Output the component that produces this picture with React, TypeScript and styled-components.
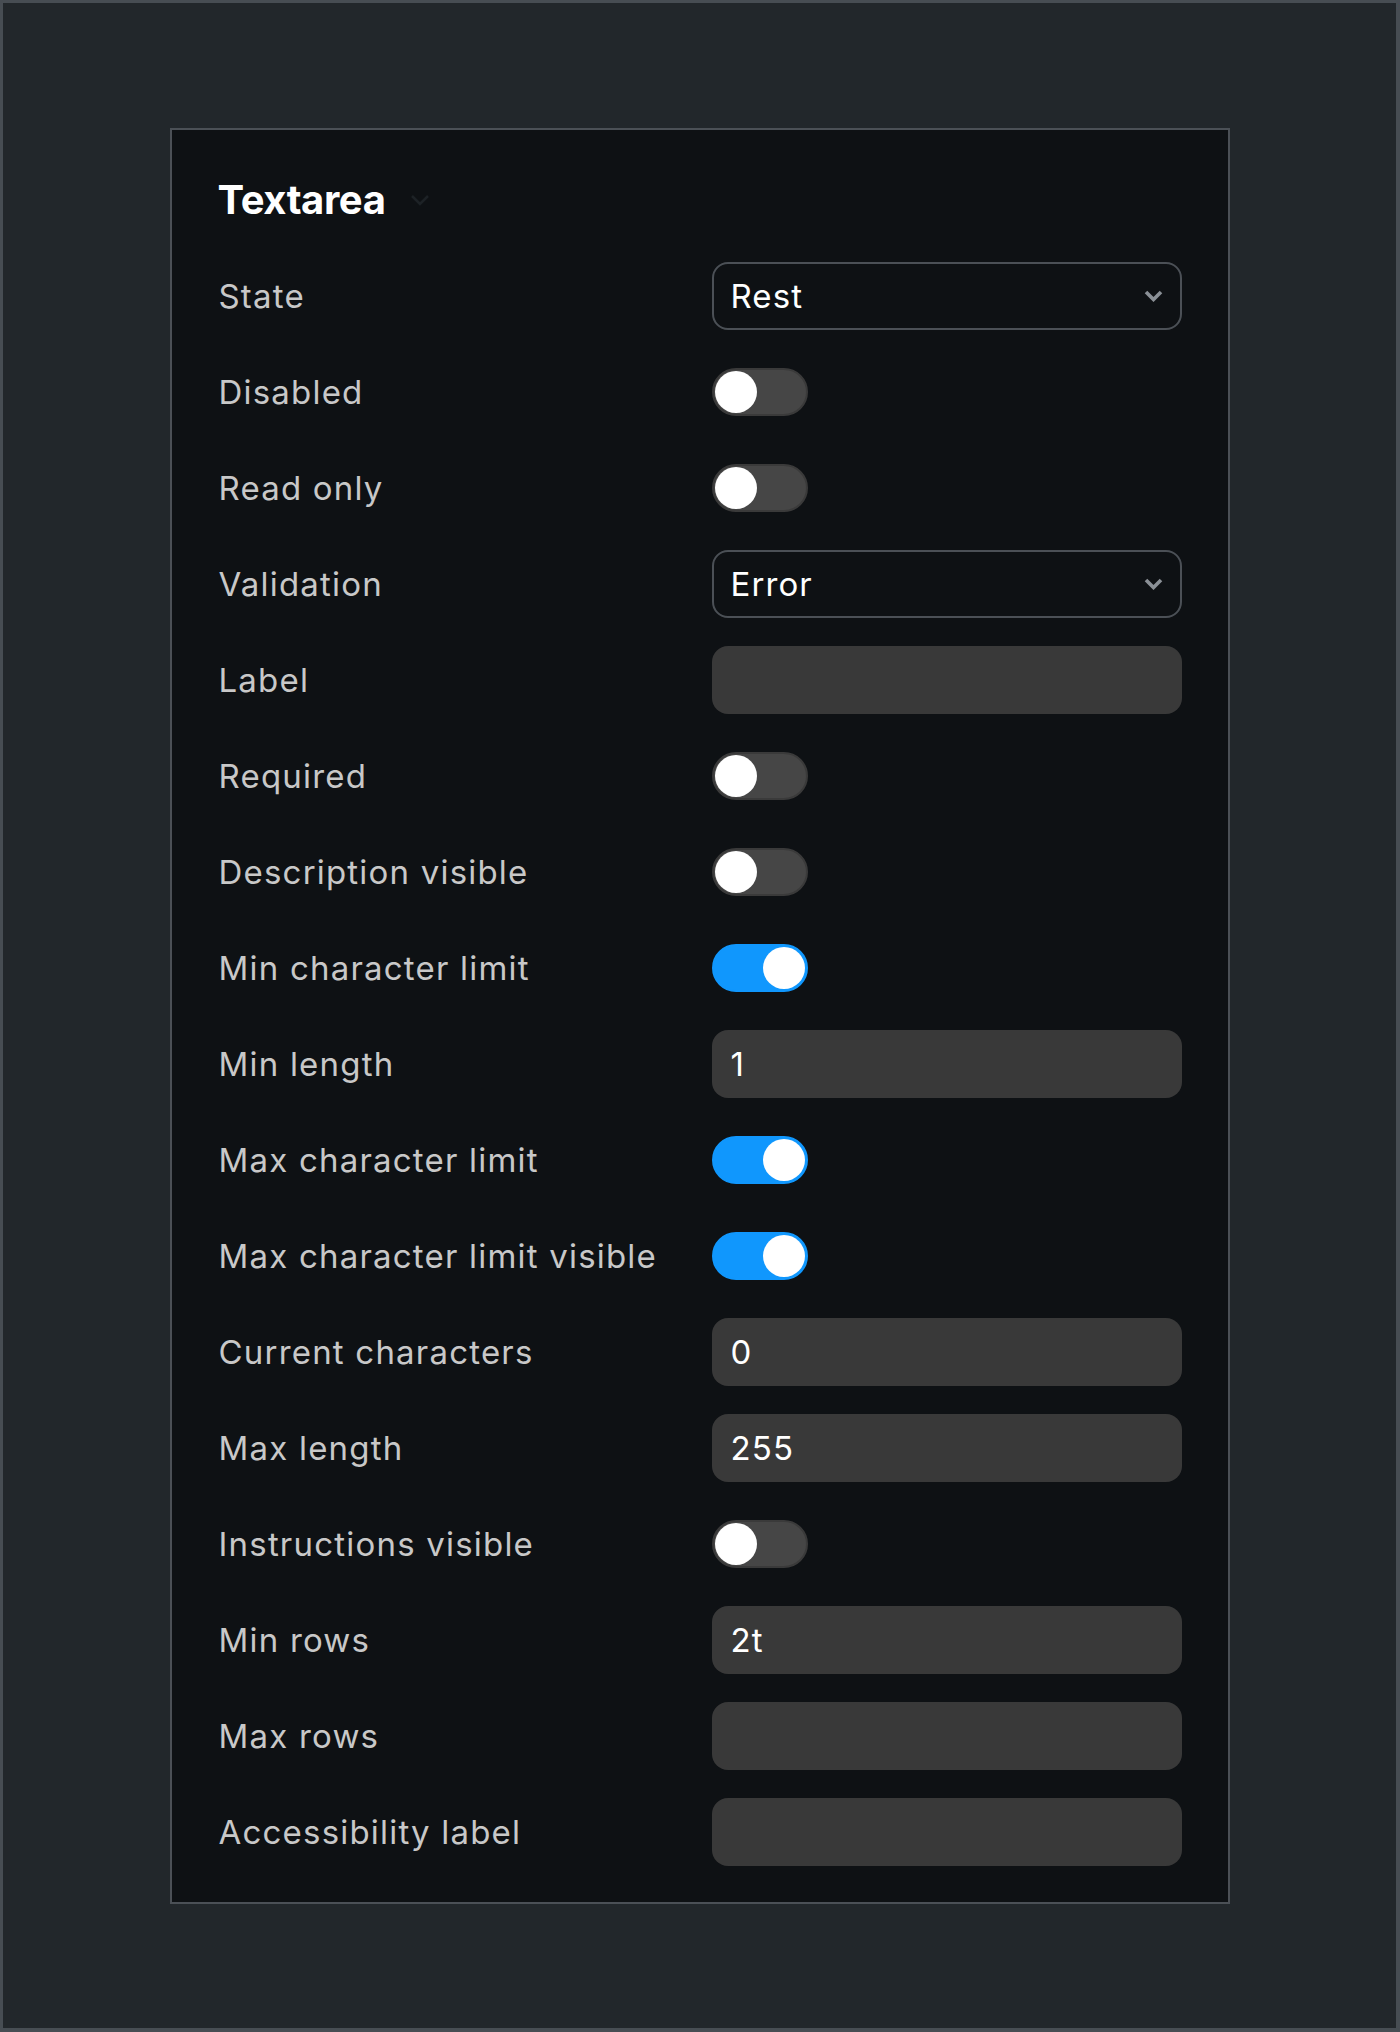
import React from "react";
import styled, { createGlobalStyle } from "styled-components";

const GlobalStyle = createGlobalStyle`
    html, body {
        margin: 0;
        padding: 0;
        background: #22272b;
    }
    body {
        font-family: Inter, "Noto Sans", "Liberation Sans", sans-serif;
        -webkit-font-smoothing: antialiased;
    }
`;

const Frame = styled.div`
    width: 1400px;
    height: 2032px;
    box-sizing: border-box;
    border-style: solid;
    border-color: #474d53;
    border-width: 3px 4px 4px 3px;
    background: #22272b;
    display: flex;
    justify-content: center;
    align-items: flex-start;
    padding-top: 125px;
`;

const Panel = styled.section`
    width: 1060px;
    box-sizing: border-box;
    border: 2px solid #4b5056;
    background: #0e1114;
    padding: 46px 46px 36px 46px;
`;

const Header = styled.div`
    display: flex;
    align-items: center;
    gap: 24px;
    margin-bottom: 38px;
`;

const Title = styled.h2`
    margin: 0;
    font-size: 40px;
    line-height: 48px;
    font-weight: 700;
    letter-spacing: -0.4px;
    color: #ffffff;
`;

const HeaderChevron = styled.svg`
    width: 20px;
    height: 13px;
    color: #1d2226;
`;

const List = styled.div`
    display: grid;
    row-gap: 28px;
`;

const Row = styled.div`
    display: grid;
    grid-template-columns: 494px 470px;
    align-items: center;
    min-height: 68px;
`;

const Label = styled.span`
    font-size: 33px;
    line-height: 40px;
    letter-spacing: 1.2px;
    color: #c8c8c8;
    padding-left: 1px;
`;

const Select = styled.div`
    height: 68px;
    box-sizing: border-box;
    border: 2px solid #4b5056;
    border-radius: 16px;
    padding: 0 17px 0 17px;
    display: flex;
    align-items: center;
    justify-content: space-between;
    font-size: 33px;
    letter-spacing: 1.1px;
    color: #ffffff;
`;

const SelectChevron = styled.svg`
    width: 19px;
    height: 12px;
    color: #8a9096;
`;

const TextField = styled.input`
    height: 68px;
    width: 100%;
    box-sizing: border-box;
    border: none;
    outline: none;
    border-radius: 16px;
    background: #393939;
    padding: 0 19px;
    font-family: inherit;
    font-size: 33px;
    letter-spacing: 1.1px;
    color: #ffffff;
`;

const Track = styled.div<{ $on: boolean }>`
    position: relative;
    width: 96px;
    height: 48px;
    box-sizing: border-box;
    border-radius: 24px;
    background: ${(p) => (p.$on ? "#1097fd" : "#464646")};
    border: 2px solid ${(p) => (p.$on ? "#1097fd" : "#3a3a3a")};
`;

const Knob = styled.span<{ $on: boolean }>`
    position: absolute;
    top: 1px;
    left: ${(p) => (p.$on ? "49px" : "1px")};
    width: 42px;
    height: 42px;
    border-radius: 50%;
    background: #ffffff;
`;

type Field =
    | { label: string; kind: "select"; value: string }
    | { label: string; kind: "toggle"; on: boolean }
    | { label: string; kind: "text"; value: string };

const fields: Field[] = [
    { label: "State", kind: "select", value: "Rest" },
    { label: "Disabled", kind: "toggle", on: false },
    { label: "Read only", kind: "toggle", on: false },
    { label: "Validation", kind: "select", value: "Error" },
    { label: "Label", kind: "text", value: "" },
    { label: "Required", kind: "toggle", on: false },
    { label: "Description visible", kind: "toggle", on: false },
    { label: "Min character limit", kind: "toggle", on: true },
    { label: "Min length", kind: "text", value: "1" },
    { label: "Max character limit", kind: "toggle", on: true },
    { label: "Max character limit visible", kind: "toggle", on: true },
    { label: "Current characters", kind: "text", value: "0" },
    { label: "Max length", kind: "text", value: "255" },
    { label: "Instructions visible", kind: "toggle", on: false },
    { label: "Min rows", kind: "text", value: "2t" },
    { label: "Max rows", kind: "text", value: "" },
    { label: "Accessibility label", kind: "text", value: "" },
];

const Control = ({ field }: { field: Field }) => {
    if (field.kind === "select") {
        return (
            <Select>
                <span>{field.value}</span>
                <SelectChevron viewBox="0 0 19 12" fill="none">
                    <polyline points="2,2 9.5,9.5 17,2" stroke="currentColor" strokeWidth="3.6" />
                </SelectChevron>
            </Select>
        );
    }
    if (field.kind === "toggle") {
        return (
            <Track $on={field.on} role="switch" aria-checked={field.on}>
                <Knob $on={field.on} />
            </Track>
        );
    }
    return <TextField readOnly defaultValue={field.value} aria-label={field.label} />;
};

export default function App() {
    return (
        <>
            <GlobalStyle />
            <Frame>
                <Panel>
                    <Header>
                        <Title>Textarea</Title>
                        <HeaderChevron viewBox="0 0 20 13" fill="none">
                            <polyline points="2,2 10,10 18,2" stroke="currentColor" strokeWidth="2.5" />
                        </HeaderChevron>
                    </Header>
                    <List>
                        {fields.map((f) => (
                            <Row key={f.label}>
                                <Label>{f.label}</Label>
                                <div>
                                    <Control field={f} />
                                </div>
                            </Row>
                        ))}
                    </List>
                </Panel>
            </Frame>
        </>
    );
}
